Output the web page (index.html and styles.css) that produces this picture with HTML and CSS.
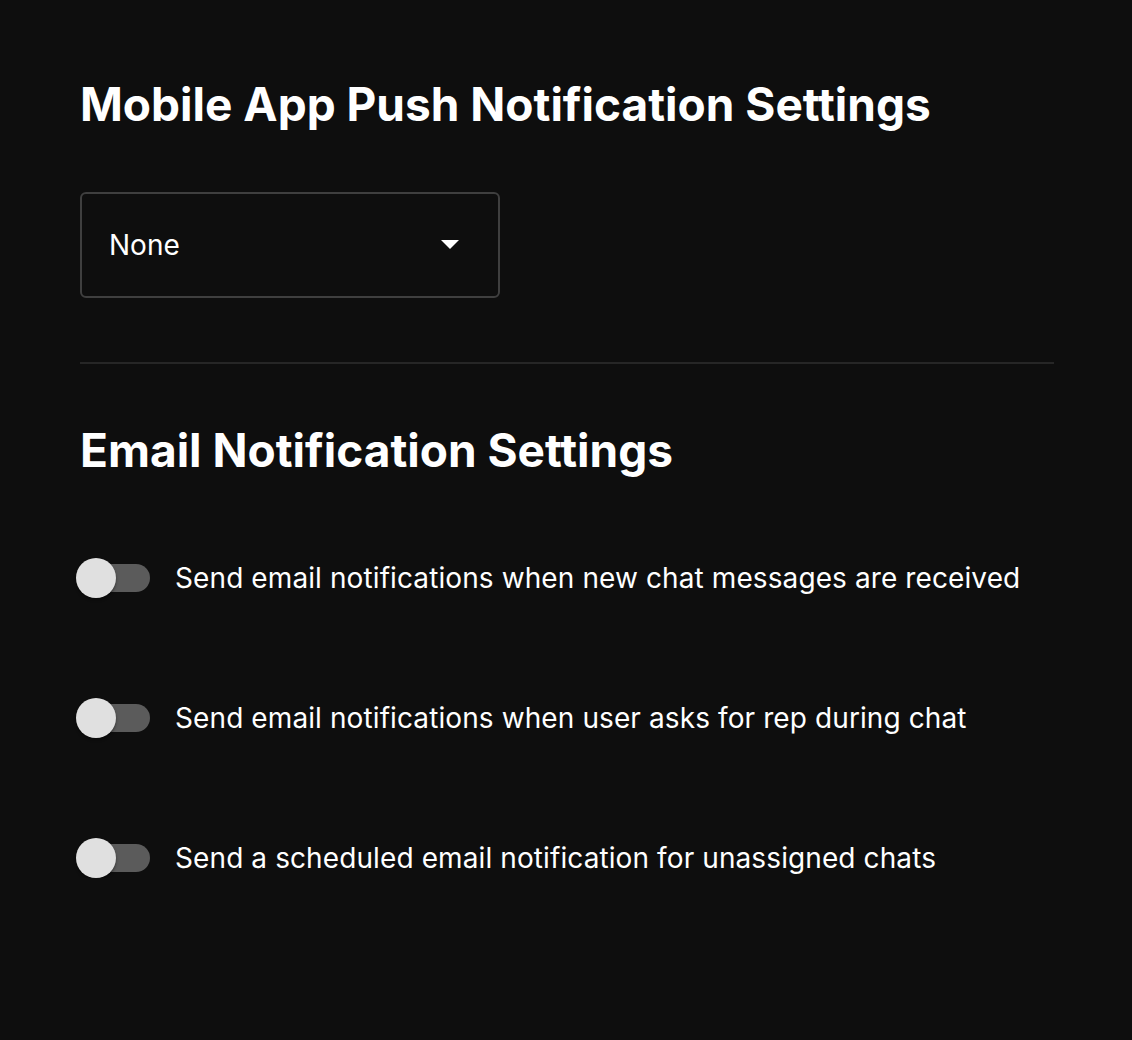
FILE: index.html
```html
<!DOCTYPE html>
<html>
<head>
<meta charset="utf-8">
<link rel="stylesheet" href="styles.css">
</head>
<body>
<main class="page">
  <section class="section">
    <h1 class="title">Mobile App Push Notification Settings</h1>
    <div class="select">
      <span class="select-value">None</span>
      <svg class="caret" width="18" height="9" viewBox="0 0 18 9"><path d="M0 0 L18 0 L9 9 Z" fill="#ffffff"/></svg>
    </div>
  </section>
  <hr class="divider">
  <section class="section">
    <h1 class="title title-email">Email Notification Settings</h1>
    <ul class="toggles">
      <li class="toggle-row"><span class="switch"><span class="track"></span><span class="thumb"></span></span><span class="label">Send email notifications when new chat messages are received</span></li>
      <li class="toggle-row"><span class="switch"><span class="track"></span><span class="thumb"></span></span><span class="label">Send email notifications when user asks for rep during chat</span></li>
      <li class="toggle-row"><span class="switch"><span class="track"></span><span class="thumb"></span></span><span class="label">Send a scheduled email notification for unassigned chats</span></li>
    </ul>
  </section>
</main>
</body>
</html>
```
FILE: styles.css
```css
html, body {
  margin: 0;
  padding: 0;
  background: #0e0e0e;
  color: #ffffff;
  font-family: Inter, "Noto Sans", sans-serif;
}
.page {
  width: 974px;
  padding: 76px 0 0 80px;
}
.title {
  margin: 0;
  font-size: 46px;
  font-weight: 700;
  letter-spacing: 0;
  line-height: 56px;
}
.select {
  box-sizing: border-box;
  margin-top: 60px;
  width: 420px;
  height: 106px;
  border: 2px solid #3f3f3f;
  border-radius: 6px;
  display: flex;
  align-items: center;
  justify-content: space-between;
  padding: 0 39px 0 27px;
}
.select-value {
  font-size: 28px;
  line-height: 34px;
  letter-spacing: 0;
}
.caret {
  display: block;
  margin-top: -2px;
}
.divider {
  margin: 64px 0 0 0;
  border: 0;
  height: 2px;
  background: #262626;
}
.title-email {
  margin-top: 58px;
}
.toggles {
  list-style: none;
  margin: 80px 0 0 0;
  padding: 0;
  display: flex;
  flex-direction: column;
  gap: 100px;
}
.toggle-row {
  display: flex;
  align-items: center;
  height: 40px;
}
.switch {
  position: relative;
  width: 70px;
  height: 40px;
  flex: none;
}
.track {
  position: absolute;
  left: 0;
  top: 6px;
  width: 70px;
  height: 28px;
  border-radius: 14px;
  background: #5b5b5b;
}
.thumb {
  position: absolute;
  left: -4px;
  top: 0;
  width: 40px;
  height: 40px;
  border-radius: 50%;
  background: #e0e0e0;
  box-shadow: 0 2px 3px rgba(0,0,0,0.4);
}
.label {
  margin-left: 25px;
  font-size: 28px;
  line-height: 34px;
  letter-spacing: 0.1px;
}
```
